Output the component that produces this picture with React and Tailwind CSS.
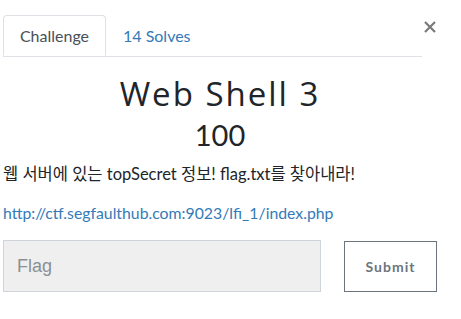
export default function App() {
  return (
    <div className="w-[461px] h-[319px] bg-white font-['Lato','Noto_Sans_CJK_KR',sans-serif] text-[#212529]">
      <div className="flex items-start pl-[3px] pt-[15px]">
        <div className="flex flex-1 border-b border-[#dee2e6]">
          <div className="h-[41px] w-[103px] -mb-px border border-[#dee2e6] border-b-white rounded-t-[4px] bg-white flex items-center justify-center text-[16px] text-[#495057]">
            Challenge
          </div>
          <div className="h-[41px] px-[17px] flex items-center text-[16px] text-[#337ab7]">
            14 Solves
          </div>
        </div>
        <button className="w-[39px] h-[26px] flex justify-start items-center pl-[2px] text-[#7a7a7a]">
          <svg width="12" height="12" viewBox="0 0 12 12" className="translate-y-[-1px]">
            <path d="M1 1 L11 11 M11 1 L1 11" stroke="currentColor" strokeWidth="2.2" />
          </svg>
        </button>
      </div>

      <div className="pl-[3px] pr-[24px]">
        <h1 className="mt-[17px] text-center text-[33px] leading-[40px] tracking-[2px] font-['Open_Sans',sans-serif] font-normal text-[#212529]">
          Web Shell 3
        </h1>
        <div className="text-center text-[29px] leading-[36px] mt-[3px] font-normal">100</div>
        <p className="mt-[10px] text-[16.5px] leading-[22px]">
          웹 서버에 있는 topSecret 정보! flag.txt를 찾아내라!
        </p>
        <p className="mt-[17px] text-[15.8px] leading-[22px] text-[#337ab7]">
          http://ctf.segfaulthub.com:9023/lfi_1/index.php
        </p>
        <div className="mt-[16px] flex items-center">
          <input
            placeholder="Flag"
            className="w-[318px] h-[52px] bg-[#efefef] border border-[#ced4da] px-[13px] text-[18px] font-['Liberation_Sans',sans-serif] placeholder:text-[#8a9096] outline-none"
          />
          <button className="ml-[23px] w-[93px] h-[51px] border border-[#6c757d] text-[14px] font-bold tracking-[1px] text-[#6c757d]">
            Submit
          </button>
        </div>
      </div>
    </div>
  );
}
